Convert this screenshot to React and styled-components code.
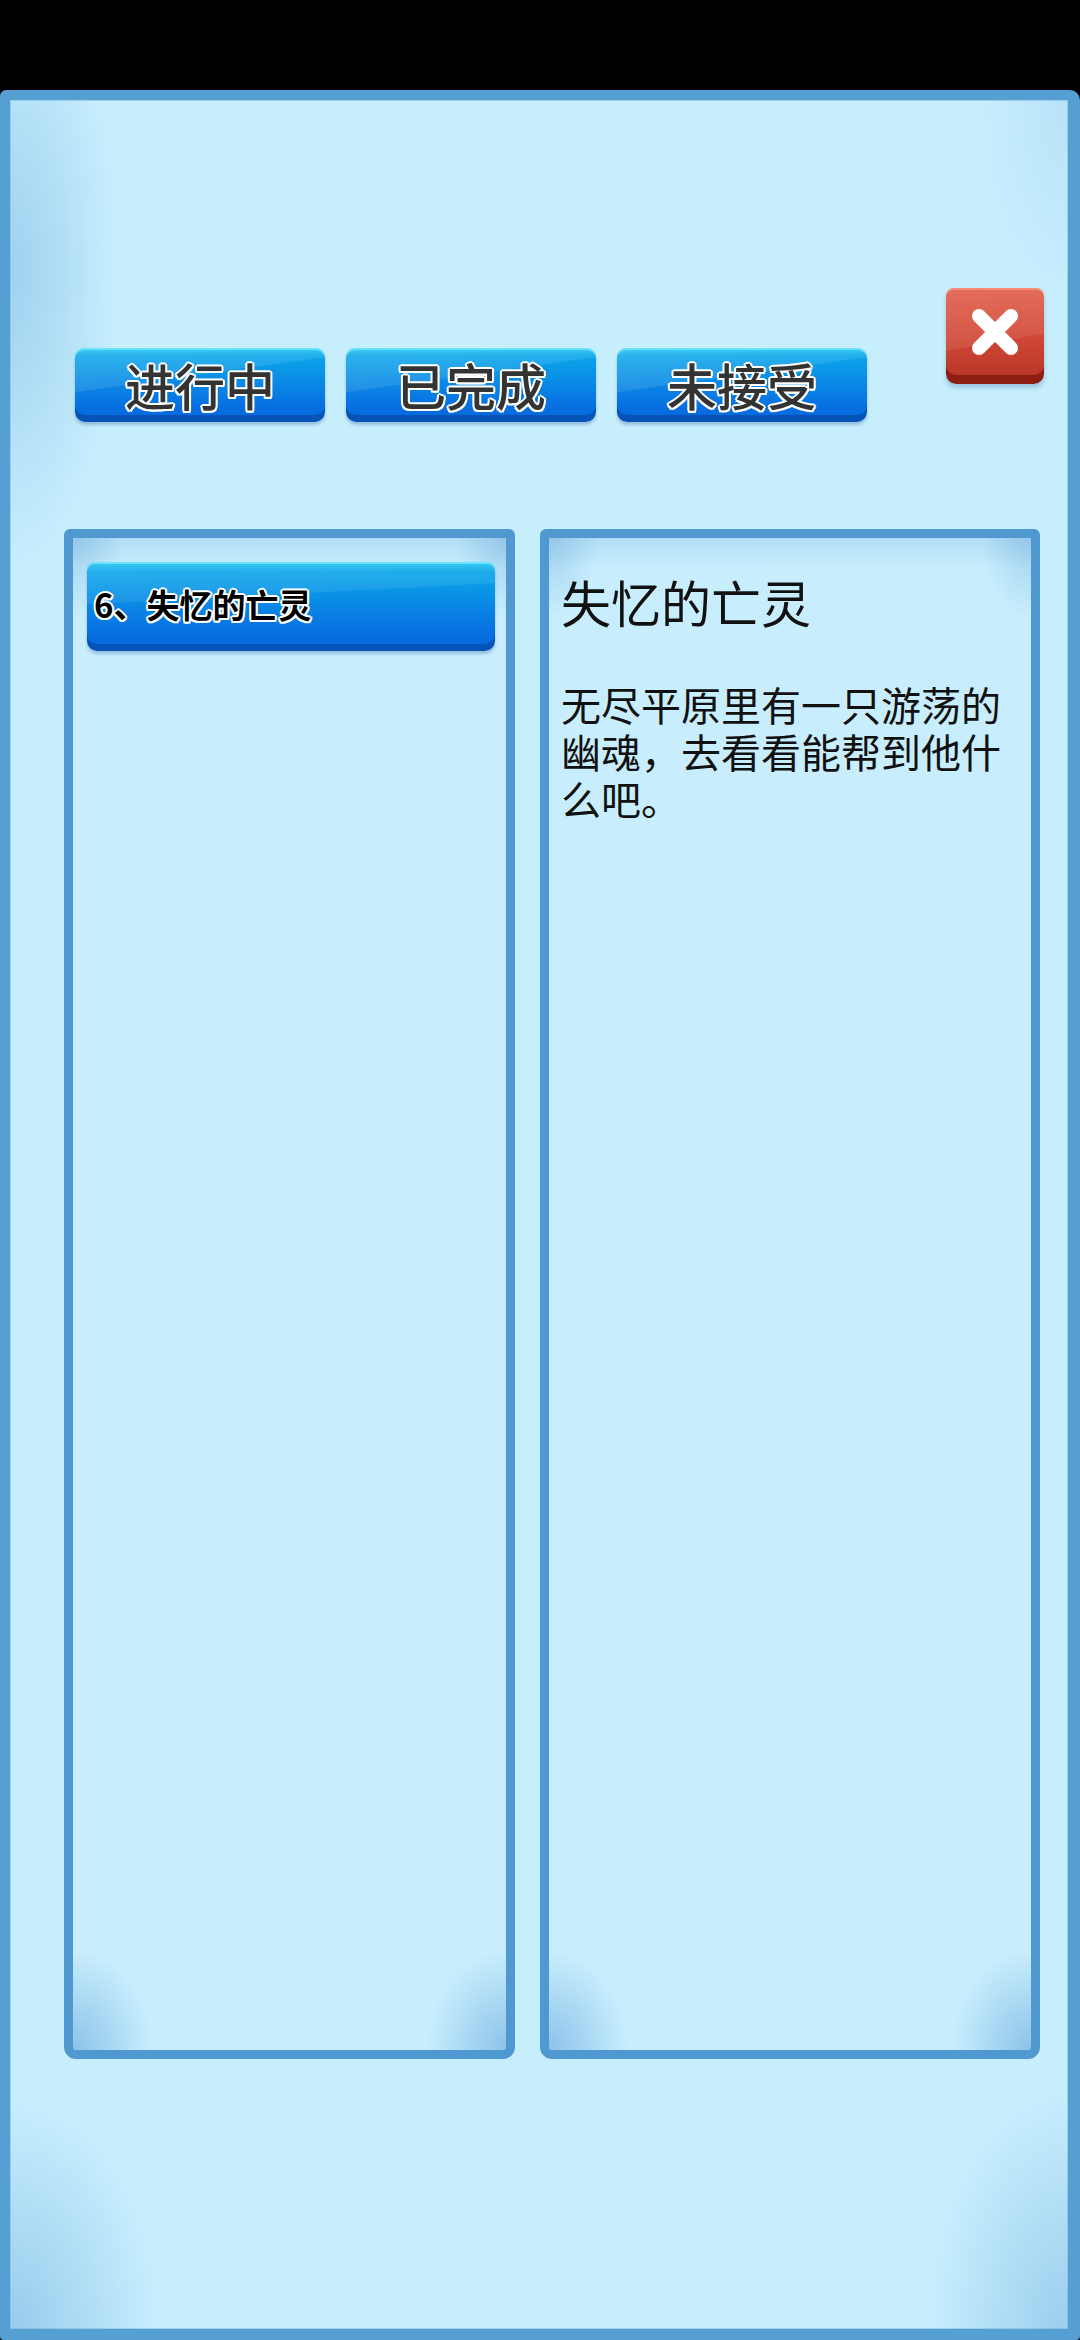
import React from "react";
import styled, { createGlobalStyle } from "styled-components";

const Global = createGlobalStyle`
  html, body { margin: 0; padding: 0; background: #000; }
  body { font-family: "Noto Sans CJK SC", "Noto Sans", sans-serif; }
  * { box-sizing: border-box; }
`;

const Screen = styled.div`
  width: 1080px;
  height: 2340px;
  display: flex;
  flex-direction: column;
  background: #000;
  overflow: hidden;
`;

const StatusBar = styled.div`
  height: 90px;
  flex: none;
  background: #000;
`;

const Frame = styled.div`
  flex: 1;
  display: flex;
  flex-direction: column;
  border-style: solid;
  border-color: #569fd2;
  border-width: 10px 12px 11px 10px;
  border-radius: 6px 10px 4px 4px;
  background:
    radial-gradient(ellipse 110px 300px at 0 170px, rgba(120, 180, 225, 0.5), rgba(120, 180, 225, 0) 100%),
    radial-gradient(ellipse 150px 230px at 0 100%, rgba(120, 180, 225, 0.6), rgba(120, 180, 225, 0) 100%),
    radial-gradient(ellipse 140px 240px at 100% 100%, rgba(120, 180, 225, 0.55), rgba(120, 180, 225, 0) 100%),
    radial-gradient(ellipse 90px 200px at 100% 0, rgba(150, 200, 235, 0.3), rgba(150, 200, 235, 0) 100%),
    #c7eefd;
  box-shadow: inset 0 0 0 1px rgba(120, 180, 225, 0.5);
`;

const Header = styled.div`
  display: flex;
  justify-content: space-between;
  align-items: flex-start;
  padding: 188px 24px 0 65px;
`;

const Tabs = styled.div`
  display: flex;
  gap: 21px;
  margin-top: 60px;
`;

const Tab = styled.button`
  width: 250px;
  height: 74px;
  padding: 0 0 3px;
  border: none;
  border-radius: 9px 9px 10px 10px;
  font-family: "Noto Sans CJK SC", sans-serif;
  font-size: 50px;
  font-weight: 500;
  line-height: 1;
  color: #333;
  text-shadow:
    2px 0 0 #fff, -2px 0 0 #fff, 0 2px 0 #fff, 0 -2px 0 #fff,
    1.5px 1.5px 0 #fff, -1.5px 1.5px 0 #fff, 1.5px -1.5px 0 #fff, -1.5px -1.5px 0 #fff;
  background:
    linear-gradient(172deg, rgba(255, 255, 255, 0.14) 0%, rgba(255, 255, 255, 0.1) 40%, rgba(255, 255, 255, 0) 41%),
    linear-gradient(180deg, #1fc9f2 0%, #0aa6ea 10%, #0a8fe6 40%, #0872e2 75%, #0766dc 100%);
  box-shadow:
    inset 0 -7px 0 #0754b8,
    inset 0 2px 0 rgba(120, 230, 255, 0.8),
    0 3px 3px rgba(60, 110, 160, 0.35);
  display: flex;
  align-items: center;
  justify-content: center;
  cursor: pointer;
`;

const CloseButton = styled.button`
  width: 98px;
  height: 96px;
  padding: 0 0 8px;
  border: none;
  border-radius: 8px 8px 10px 10px;
  background:
    linear-gradient(170deg, rgba(255, 255, 255, 0.12) 0%, rgba(255, 255, 255, 0.08) 55%, rgba(255, 255, 255, 0) 56%),
    linear-gradient(180deg, #e05a46 0%, #d34a38 45%, #c13c2c 80%, #b4301f 100%);
  box-shadow:
    inset 0 -9px 0 #8d1e12,
    inset 0 2px 0 rgba(255, 150, 130, 0.7),
    0 4px 4px rgba(60, 110, 160, 0.3);
  display: flex;
  align-items: center;
  justify-content: center;
  cursor: pointer;
`;

const Panels = styled.div`
  display: flex;
  gap: 25px;
  padding: 0 0 0 54px;
  margin-top: 107px;
`;

const Panel = styled.div`
  width: ${(p) => p.$w}px;
  height: 1530px;
  border: 9px solid #4f99d0;
  border-radius: 6px 6px 12px 12px;
  background:
    linear-gradient(180deg, rgba(110, 170, 220, 0.25), rgba(110, 170, 220, 0) 30px),
    radial-gradient(ellipse 50px 80px at 0 0, rgba(110, 170, 220, 0.45), rgba(110, 170, 220, 0) 100%),
    radial-gradient(ellipse 50px 80px at 100% 0, rgba(110, 170, 220, 0.45), rgba(110, 170, 220, 0) 100%),
    radial-gradient(ellipse 80px 100px at 0 100%, rgba(100, 165, 220, 0.6), rgba(100, 165, 220, 0) 100%),
    radial-gradient(ellipse 80px 100px at 100% 100%, rgba(100, 165, 220, 0.6), rgba(100, 165, 220, 0) 100%),
    #c8eefd;
  padding: ${(p) => p.$pad};
`;

const QuestItem = styled.div`
  height: 89px;
  border-radius: 8px 8px 10px 10px;
  display: flex;
  align-items: center;
  padding: 0 0 6px 7px;
  font-family: "Noto Sans CJK SC", sans-serif;
  font-size: 33px;
  font-weight: 700;
  color: #000;
  text-shadow:
    2px 0 0 #fff, -2px 0 0 #fff, 0 2px 0 #fff, 0 -2px 0 #fff,
    1.5px 1.5px 0 #fff, -1.5px 1.5px 0 #fff, 1.5px -1.5px 0 #fff, -1.5px -1.5px 0 #fff;
  background:
    linear-gradient(177deg, rgba(255, 255, 255, 0.12) 0%, rgba(255, 255, 255, 0.08) 38%, rgba(255, 255, 255, 0) 39%),
    linear-gradient(180deg, #1fc9f2 0%, #0aa6ea 10%, #0a8fe6 40%, #0872e2 75%, #0766dc 100%);
  box-shadow:
    inset 0 -7px 0 #0754b8,
    inset 0 2px 0 rgba(120, 230, 255, 0.8),
    0 3px 3px rgba(60, 110, 160, 0.35);
`;

const Title = styled.h2`
  margin: 0;
  font-family: "Noto Sans CJK SC", sans-serif;
  font-size: 50px;
  font-weight: 400;
  line-height: 58px;
  color: #111;
`;

const Desc = styled.p`
  margin: 51px 0 0;
  font-family: "Noto Sans CJK SC", sans-serif;
  font-size: 40px;
  font-weight: 400;
  line-height: 47px;
  color: #111;
`;

const CloseIcon = () => (
  <svg width="56" height="56" viewBox="0 0 56 56">
    <path
      d="M12 12 L44 44 M44 12 L12 44"
      stroke="#fff"
      strokeWidth="14"
      strokeLinecap="round"
    />
  </svg>
);

export default function App() {
  const tabs = ["进行中", "已完成", "未接受"];
  return (
    <>
      <Global />
      <Screen>
        <StatusBar />
        <Frame>
          <Header>
            <Tabs>
              {tabs.map((t) => (
                <Tab key={t}>{t}</Tab>
              ))}
            </Tabs>
            <CloseButton aria-label="关闭">
              <CloseIcon />
            </CloseButton>
          </Header>
          <Panels>
            <Panel $w={451} $pad="24px 11px 0 14px">
              <QuestItem>6、失忆的亡灵</QuestItem>
            </Panel>
            <Panel $w={500} $pad="34px 12px 0 12px">
              <Title>失忆的亡灵</Title>
              <Desc>无尽平原里有一只游荡的幽魂，去看看能帮到他什么吧。</Desc>
            </Panel>
          </Panels>
        </Frame>
      </Screen>
    </>
  );
}
